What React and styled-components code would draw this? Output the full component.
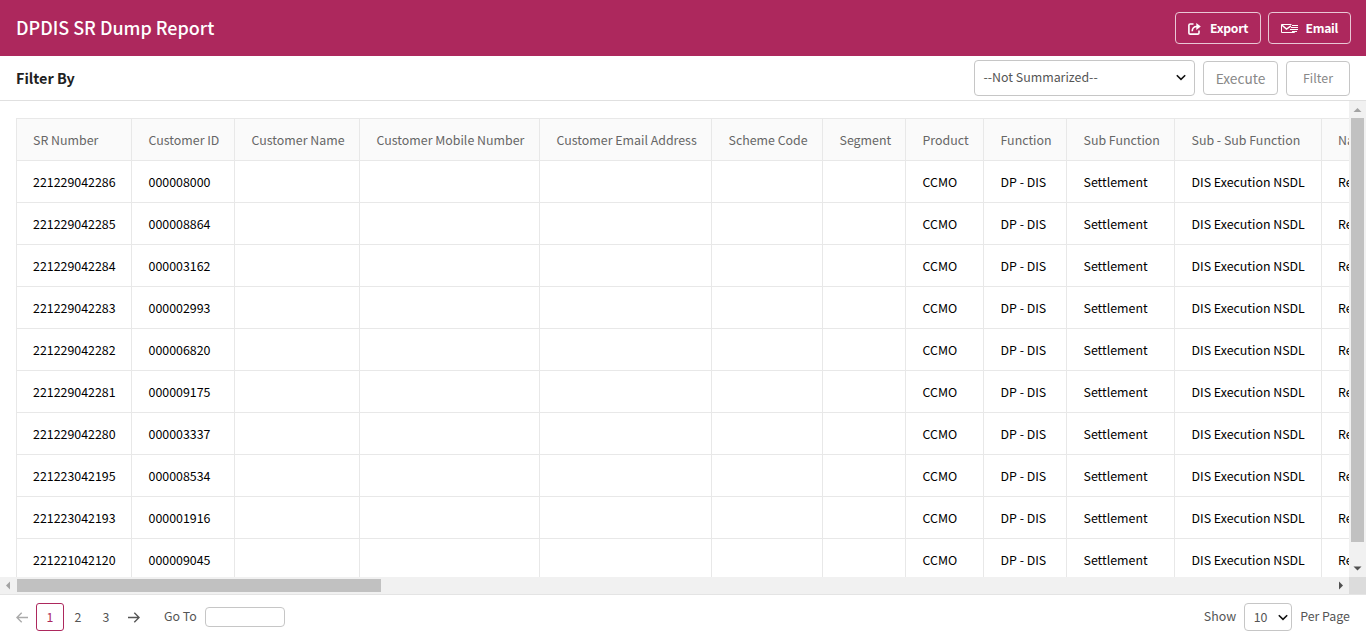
import React from "react";
import styled, { createGlobalStyle } from "styled-components";

const Global = createGlobalStyle`
  * { box-sizing: border-box; }
  html, body, #root { margin: 0; height: 100%; }
  body { overflow: hidden; background: #fff; }
  body, button, input { font-family: "Noto Sans CJK SC", sans-serif; font-size: 12.4px; }
`;

const Page = styled.div`
  height: 631px;
  display: flex;
  flex-direction: column;
  color: #555;
`;
const Header = styled.header`
  height: 56px;
  flex: none;
  display: flex;
  align-items: center;
  gap: 7px;
  padding: 0 15px 0 16px;
  background: #ad285d;
`;
const Title = styled.h1`
  margin: 0 auto 0 0;
  padding-bottom: 2px;
  font-size: 17.95px;
  line-height: 24px;
  font-weight: 500;
  color: #fff;
`;
const HeaderButton = styled.button`
  width: ${(p) => p.$width}px;
  height: 32px;
  display: flex;
  align-items: center;
  justify-content: space-between;
  padding: 0 12px;
  border: 1px solid #e9c8d5;
  border-radius: 4px;
  background: transparent;
  color: #fff;
  font-weight: 700;
  font-size: 12.2px;
  letter-spacing: -0.3px;
  line-height: 20px;
`;
const FilterBar = styled.div`
  height: 45px;
  flex: none;
  display: flex;
  align-items: center;
  padding: 0 16px;
  border-bottom: 1px solid #e0e0e0;
`;
const FilterLabel = styled.h2`
  margin: 0 auto 0 0;
  font-size: 14.4px;
  line-height: 20px;
  font-weight: 700;
  color: #212121;
`;
const Select = styled.div`
  width: ${(p) => p.$width}px;
  height: ${(p) => p.$height}px;
  display: flex;
  align-items: center;
  justify-content: space-between;
  padding: 0 ${(p) => p.$right}px ${(p) => p.$bottom || 0}px 8.5px;
  border: 1px solid #c6c6c6;
  border-radius: 4px;
  line-height: 20px;
`;
const FilterButton = styled.button`
  width: ${(p) => p.$width}px;
  height: ${(p) => p.$height}px;
  margin-left: 8px;
  padding: 0;
  border: 1px solid #c6c6c6;
  border-radius: 4px;
  background: #fff;
  color: #888;
  font-size: ${(p) => p.$size}px;
  line-height: 20px;
`;
const Content = styled.main`
  height: 494px;
  flex: none;
  display: grid;
  grid-template: 476px 17px / 1349px 17px;
  border-bottom: 1px solid #e4e4e4;
`;
const TableArea = styled.div`
  overflow: hidden;
  padding: 17px 0 0 16px;
`;
const Table = styled.table`
  table-layout: fixed;
  width: 1506px;
  border-collapse: separate;
  border-spacing: 0;
  border-left: 1px solid #e8e8e8;
  border-top: 1px solid #e8e8e8;
`;
const Cell = styled.td`
  height: 42px;
  padding: 0 0 0 16.5px;
  border-right: 1px solid #e8e8e8;
  border-bottom: 1px solid #e8e8e8;
  color: #000;
  line-height: 20px;
  white-space: nowrap;

  &:first-child,
  &:last-child { padding-left: 16px; }
`;
const HeadCell = styled(Cell)`
  background: #fafafa;
  color: #666;
  font-weight: 400;
  text-align: left;
`;
const Track = styled.div`
  display: flex;
  flex-direction: ${(p) => (p.$vertical ? "column" : "row")};
  align-items: center;
  background: #f1f1f1;
`;
const Thumb = styled.div`
  width: ${(p) => p.$width}px;
  height: ${(p) => p.$height}px;
  margin: ${(p) => p.$margin};
  background: #c1c1c1;
`;
const Corner = styled.div`
  background: #dcdcdc;
`;
const Footer = styled.footer`
  height: 28px;
  margin-top: 8px;
  flex: none;
  display: flex;
  align-items: center;
  padding: 0 16px;
  line-height: 20px;
`;
const PageList = styled.nav`
  display: flex;
  margin: 0 8px;
`;
const PageItem = styled.button`
  width: 28px;
  height: 28px;
  padding: 0;
  border: 1px solid ${(p) => (p.$active ? "#ad285d" : "transparent")};
  border-radius: 3px;
  background: none;
  color: ${(p) => (p.$active ? "#ad285d" : "#555")};
  line-height: 20px;
`;
const GoTo = styled.label`
  display: flex;
  align-items: center;
  gap: 8px;
  margin: 0 auto 0 24px;
`;
const FooterText = styled.span`
  padding-bottom: 2px;
`;
const GoToInput = styled.input`
  width: 80px;
  height: 20px;
  border: 1px solid #c6c6c6;
  border-radius: 4px;
`;
const PerPage = styled.div`
  display: flex;
  align-items: center;
  gap: 8px;
`;

const Chevron = () => (
  <svg width="10" height="8" viewBox="0 0 10 8" fill="none" stroke="#111" strokeWidth="1.6">
    <path d="M0.8 2.2 5 6.3 9.2 2.2" />
  </svg>
);
const Arrow = ({ right, color }) => (
  <svg width="12" height="12" viewBox="0 0 12 12" fill="none" stroke={color} strokeWidth="1.4">
    <path d={right ? "M0 6.5H11M6.3 1.7 11.1 6.5 6.3 11.3" : "M12 6.5H1M5.7 1.7 0.9 6.5 5.7 11.3"} />
  </svg>
);
const triangles = {
  up: "M4.5 11 8.5 7 12.5 11Z",
  down: "M4.5 6.5 8.5 10.5 12.5 6.5Z",
  left: "M10 4.5 6 8.5 10 12.5Z",
  right: "M7 4.5 11 8.5 7 12.5Z",
};
const ScrollArrow = ({ dir, color }) => (
  <svg width="17" height="17" viewBox="0 0 17 17">
    <path d={triangles[dir]} fill={color} />
  </svg>
);
const ExportIcon = () => (
  <svg width="13" height="13" viewBox="0 0 13 13" fill="none" stroke="#fff" strokeWidth="1.6">
    <path d="M5.5 2H2.2Q0.9 2 0.9 3.3V11Q0.9 12.1 2.2 12.1H9.7Q11 12.1 11 11V8.5" />
    <path d="M4.2 9.3Q4.2 4.5 9 4.5" />
    <path d="M8.3 1 12.8 4.5 8.3 8Z" fill="#fff" stroke="none" />
  </svg>
);
const EmailIcon = () => (
  <svg width="17" height="12" viewBox="0 0 17 12" fill="none" stroke="#fff" strokeWidth="1">
    <path d="M10.5 2.5H0.5V10.5H13.5V9.5" />
    <path d="M0.5 2.8 5.5 7 10 3.8" strokeWidth="1.5" />
    <path d="M11 3.5H17M10 5.5H17M9 7.5H17M11 9.5H16" />
  </svg>
);

const columns = [
  ["SR Number", 115],
  ["Customer ID", 103],
  ["Customer Name", 125],
  ["Customer Mobile Number", 180],
  ["Customer Email Address", 172],
  ["Scheme Code", 111],
  ["Segment", 83],
  ["Product", 78],
  ["Function", 83],
  ["Sub Function", 108],
  ["Sub - Sub Function", 147],
  ["Name", 200],
];
const records = [
  ["221229042286", "000008000"],
  ["221229042285", "000008864"],
  ["221229042284", "000003162"],
  ["221229042283", "000002993"],
  ["221229042282", "000006820"],
  ["221229042281", "000009175"],
  ["221229042280", "000003337"],
  ["221223042195", "000008534"],
  ["221223042193", "000001916"],
  ["221221042120", "000009045"],
];
const common = ["", "", "", "", "", "CCMO", "DP - DIS", "Settlement", "DIS Execution NSDL", "Request"];

export default function App() {
  return (
    <Page>
      <Global />
      <Header>
        <Title>DPDIS SR Dump Report</Title>
        <HeaderButton $width={86}><ExportIcon />Export</HeaderButton>
        <HeaderButton $width={83}><EmailIcon />Email</HeaderButton>
      </Header>
      <FilterBar>
        <FilterLabel>Filter By</FilterLabel>
        <Select $width={221} $height={36} $right={8} $bottom={2}>--Not Summarized--<Chevron /></Select>
        <FilterButton $width={75} $height={34} $size={13.7}>Execute</FilterButton>
        <FilterButton $width={64} $height={35} $size={12.4}>Filter</FilterButton>
      </FilterBar>
      <Content>
        <TableArea>
          <Table>
            <colgroup>
              {columns.map(([name, width]) => <col key={name} style={{ width }} />)}
            </colgroup>
            <thead>
              <tr>{columns.map(([name]) => <HeadCell as="th" key={name}>{name}</HeadCell>)}</tr>
            </thead>
            <tbody>
              {records.map((record) => (
                <tr key={record[0]}>
                  {[...record, ...common].map((value, i) => <Cell key={i}>{value}</Cell>)}
                </tr>
              ))}
            </tbody>
          </Table>
        </TableArea>
        <Track $vertical>
          <ScrollArrow dir="up" color="#a3a3a3" />
          <Thumb $width={13} $height={424} $margin="0 0 auto" />
          <ScrollArrow dir="down" color="#505050" />
        </Track>
        <Track>
          <ScrollArrow dir="left" color="#a3a3a3" />
          <Thumb $width={364} $height={13} $margin="0 auto 0 0" />
          <ScrollArrow dir="right" color="#505050" />
        </Track>
        <Corner />
      </Content>
      <Footer>
        <Arrow color="#aaa" />
        <PageList>
          <PageItem $active>1</PageItem>
          <PageItem>2</PageItem>
          <PageItem>3</PageItem>
        </PageList>
        <Arrow right color="#555" />
        <GoTo><FooterText>Go To</FooterText><GoToInput /></GoTo>
        <PerPage>
          <FooterText>Show</FooterText>
          <Select $width={48} $height={28} $right={3}>10<Chevron /></Select>
          <FooterText>Per Page</FooterText>
        </PerPage>
      </Footer>
    </Page>
  );
}
